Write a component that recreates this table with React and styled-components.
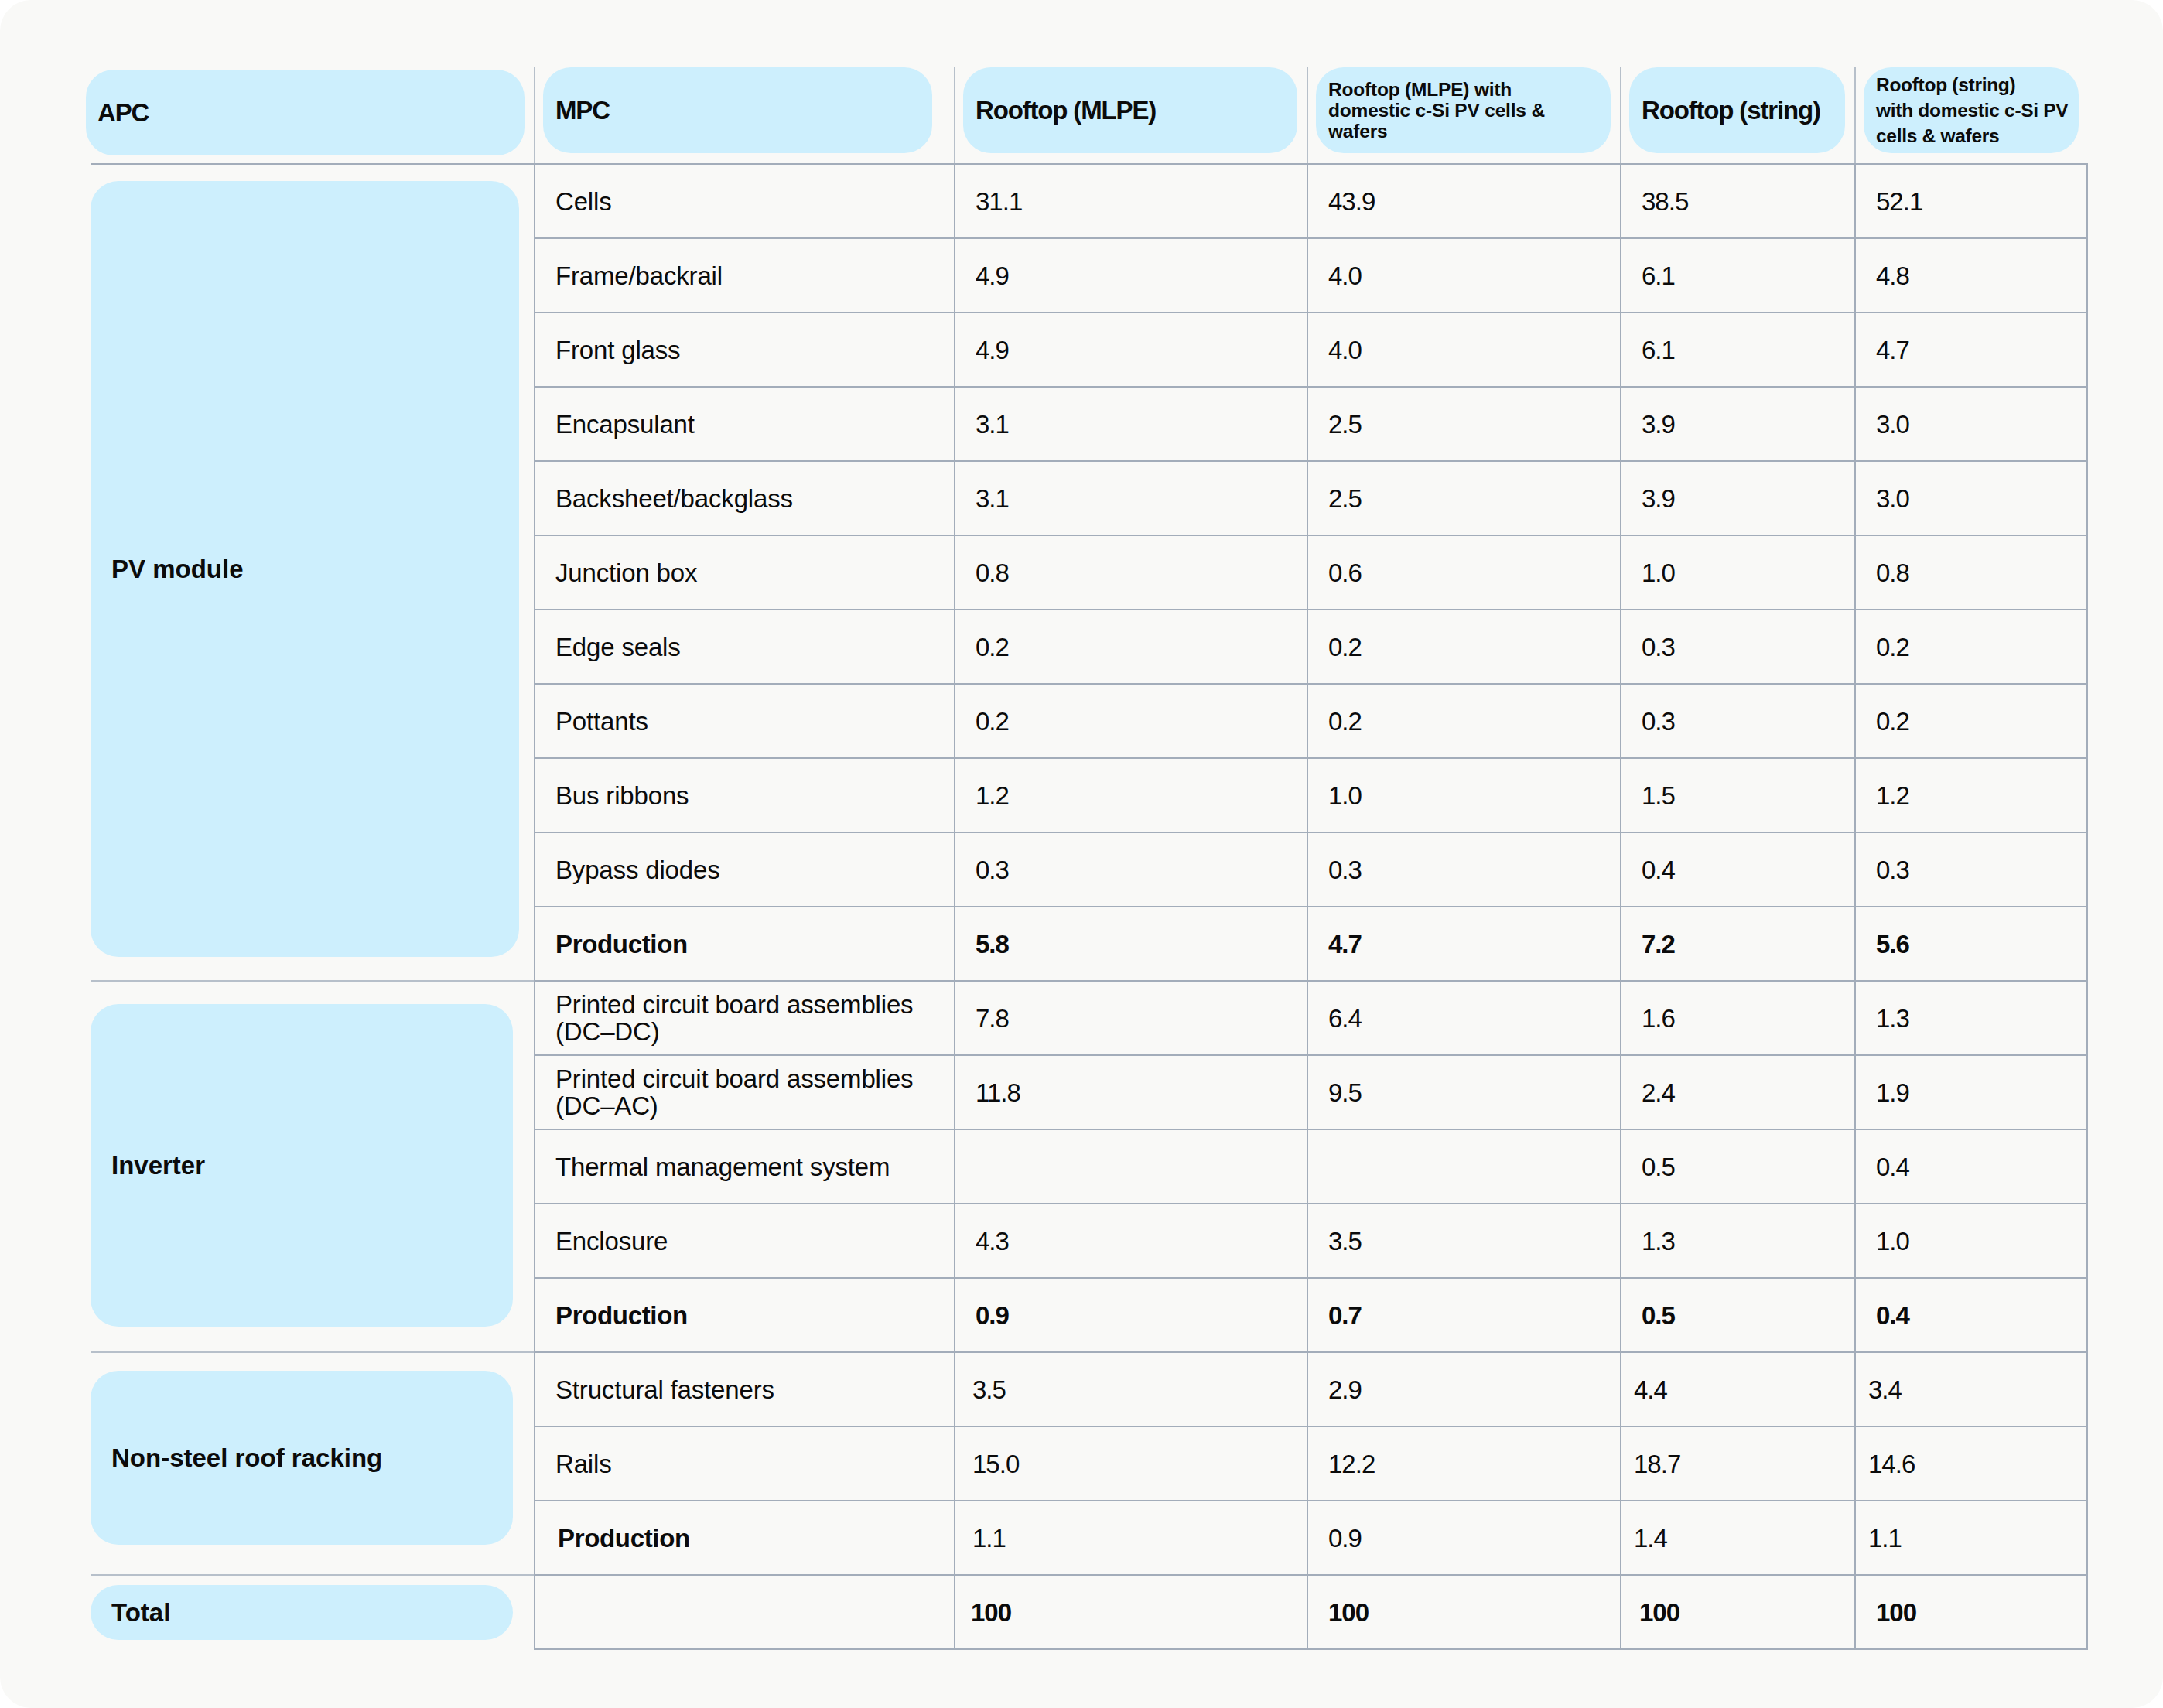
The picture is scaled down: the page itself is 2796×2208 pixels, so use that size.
import React from 'react';
import styled, { createGlobalStyle } from 'styled-components';

const GlobalStyle = createGlobalStyle`
  html, body {
    margin: 0;
    padding: 0;
    background: #ffffff;
  }
  body {
    font-family: "Liberation Sans", Arial, sans-serif;
    color: #0b0b0b;
  }
  * {
    box-sizing: border-box;
  }
`;

const COLS = '573px 543px 456px 405px 303px 302px';
const LINE = '#a3adba';
const SOFT_LINE = '#b7c0ca';
const PILL = '#cdeffd';

const Card = styled.div`
  width: 2796px;
  height: 2208px;
  background: #f9f9f7;
  border-radius: 40px;
  padding: 87px 0 0 117px;
  overflow: hidden;
`;

const Table = styled.div`
  width: 2582px;
  display: flex;
  flex-direction: column;
`;

const HeaderRow = styled.div`
  display: grid;
  grid-template-columns: ${COLS};
  height: 126px;
  border-bottom: 2px solid ${LINE};
`;

const HeadCell = styled.div`
  display: flex;
  align-items: flex-start;
  padding: 0 ${p => p.$padRight ?? 12}px 0 10px;
  border-left: 2px solid ${SOFT_LINE};

  &:first-child {
    border-left: none;
    padding: 3px 12px 0 0;
  }
`;

const HeadPill = styled.div`
  flex: 1;
  height: 111px;
  margin-left: ${p => p.$outdent ? '-6px' : '0'};
  background: ${PILL};
  border-radius: 36px;
  display: flex;
  align-items: center;
  padding: 0 8px 0 ${p => p.$outdent ? 15 : 16}px;
  font-weight: 700;
  font-size: ${p => p.$small ? '24.5px' : '33px'};
  line-height: ${p => p.$lh || 36}px;
  letter-spacing: ${p => p.$small ? `${p.$track}em` : '-0.035em'};
  white-space: nowrap;
`;

const Section = styled.div`
  display: grid;
  grid-template-columns: ${COLS};
  grid-auto-rows: 96px;
`;

const GroupCell = styled.div`
  grid-row: span ${p => p.$span};
  display: flex;
  padding: ${p => p.$gap[0]}px ${p => p.$gap[1]}px ${p => p.$gap[2]}px 0;
  border-bottom: ${p => p.$open ? 'none' : `2px solid ${SOFT_LINE}`};
`;

const GroupPill = styled.div`
  flex: 1;
  background: ${PILL};
  border-radius: 36px;
  display: flex;
  align-items: center;
  padding-left: 27px;
  font-weight: 700;
  font-size: 33px;
`;

const Cell = styled.div`
  display: flex;
  align-items: center;
  padding: 0 14px 0 ${p => 26 + (p.$nudge || 0)}px;
  border-left: 2px solid ${LINE};
  border-bottom: 2px solid ${LINE};
  border-right: ${p => p.$last ? `2px solid ${LINE}` : 'none'};
  font-size: 33px;
  line-height: 35px;
  font-weight: ${p => p.$bold ? 700 : 400};
  letter-spacing: ${p => p.$num ? '-0.03em' : p.$bold ? '-0.01em' : '-0.005em'};
`;

const headers = [
  { text: 'APC', outdent: true },
  { text: 'MPC', padRight: 28 },
  { text: 'Rooftop (MLPE)' },
  { lines: ['Rooftop (MLPE) with', 'domestic c-Si PV cells &', 'wafers'], small: true, lh: 27, track: -0.008 },
  { text: 'Rooftop (string)' },
  { lines: ['Rooftop (string)', 'with domestic c-Si PV', 'cells & wafers'], small: true, lh: 33, track: -0.012 },
];

const sections = [
  {
    label: 'PV module',
    gap: [21, 19, 30],
    rows: [
      { name: 'Cells', values: ['31.1', '43.9', '38.5', '52.1'] },
      { name: 'Frame/backrail', values: ['4.9', '4.0', '6.1', '4.8'] },
      { name: 'Front glass', values: ['4.9', '4.0', '6.1', '4.7'] },
      { name: 'Encapsulant', values: ['3.1', '2.5', '3.9', '3.0'] },
      { name: 'Backsheet/backglass', values: ['3.1', '2.5', '3.9', '3.0'] },
      { name: 'Junction box', values: ['0.8', '0.6', '1.0', '0.8'] },
      { name: 'Edge seals', values: ['0.2', '0.2', '0.3', '0.2'] },
      { name: 'Pottants', values: ['0.2', '0.2', '0.3', '0.2'] },
      { name: 'Bus ribbons', values: ['1.2', '1.0', '1.5', '1.2'] },
      { name: 'Bypass diodes', values: ['0.3', '0.3', '0.4', '0.3'] },
      { name: 'Production', values: ['5.8', '4.7', '7.2', '5.6'], boldName: true, boldValues: true },
    ],
  },
  {
    label: 'Inverter',
    gap: [29, 27, 32],
    rows: [
      { name: 'Printed circuit board assemblies (DC\u2013DC)', values: ['7.8', '6.4', '1.6', '1.3'] },
      { name: 'Printed circuit board assemblies (DC\u2013AC)', values: ['11.8', '9.5', '2.4', '1.9'] },
      { name: 'Thermal management system', values: ['', '', '0.5', '0.4'] },
      { name: 'Enclosure', values: ['4.3', '3.5', '1.3', '1.0'] },
      { name: 'Production', values: ['0.9', '0.7', '0.5', '0.4'], boldName: true, boldValues: true },
    ],
  },
  {
    label: 'Non-steel roof racking',
    gap: [23, 27, 38],
    nudges: [-4, 0, -10, -10],
    rows: [
      { name: 'Structural fasteners', values: ['3.5', '2.9', '4.4', '3.4'] },
      { name: 'Rails', values: ['15.0', '12.2', '18.7', '14.6'] },
      { name: 'Production', values: ['1.1', '0.9', '1.4', '1.1'], boldName: true, nameNudge: 3 },
    ],
  },
  {
    label: 'Total',
    gap: [12, 27, 13],
    open: true,
    nudges: [-6, 0, -3, 0],
    rows: [
      { name: '', values: ['100', '100', '100', '100'], boldValues: true },
    ],
  },
];

const App = () => (
  <>
    <GlobalStyle />
    <Card>
      <Table>
        <HeaderRow>
          {headers.map((h, i) => (
            <HeadCell key={i} $padRight={h.padRight}>
              <HeadPill $outdent={h.outdent} $small={h.small} $lh={h.lh} $track={h.track}>
                {h.lines ? (
                  <span>
                    {h.lines.map((l, j) => (
                      <React.Fragment key={j}>
                        {l}
                        {j < h.lines.length - 1 && <br />}
                      </React.Fragment>
                    ))}
                  </span>
                ) : (
                  h.text
                )}
              </HeadPill>
            </HeadCell>
          ))}
        </HeaderRow>

        {sections.map((s) => (
          <Section key={s.label}>
            <GroupCell $span={s.rows.length} $gap={s.gap} $open={s.open}>
              <GroupPill>{s.label}</GroupPill>
            </GroupCell>
            {s.rows.map((r, ri) => (
              <React.Fragment key={ri}>
                <Cell $bold={r.boldName} $nudge={r.nameNudge}>{r.name}</Cell>
                {r.values.map((v, vi) => (
                  <Cell
                    key={vi}
                    $num
                    $bold={r.boldValues}
                    $last={vi === r.values.length - 1}
                    $nudge={s.nudges ? s.nudges[vi] : 0}
                  >
                    {v}
                  </Cell>
                ))}
              </React.Fragment>
            ))}
          </Section>
        ))}
      </Table>
    </Card>
  </>
);

export default App;
